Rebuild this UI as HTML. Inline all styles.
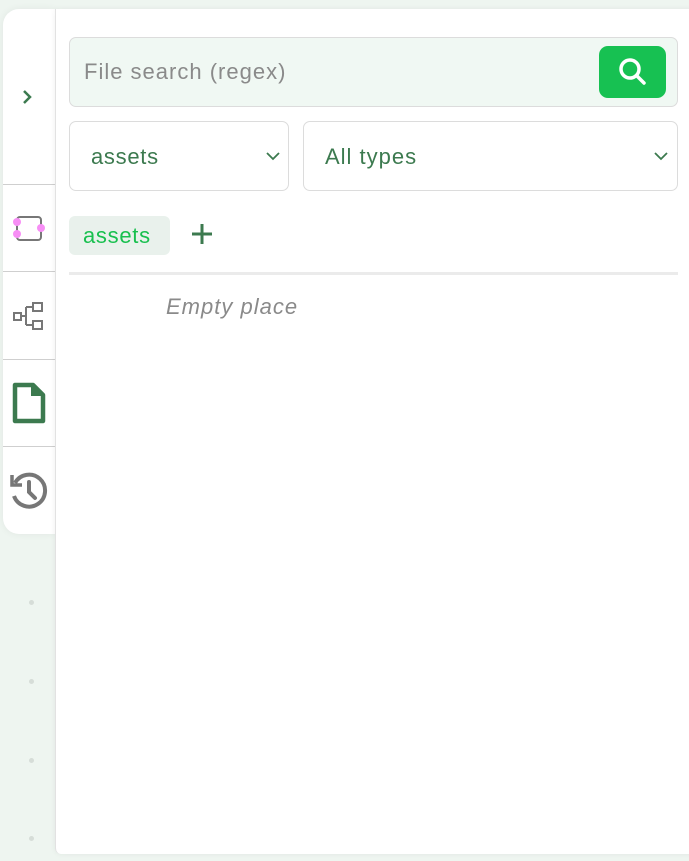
<!DOCTYPE html>
<html><head><style>
body{margin:0;width:689px;height:861px;background:#eef5f0;font-family:"Liberation Sans",sans-serif;position:relative;overflow:hidden}
.side{position:absolute;left:3px;top:9px;width:52px;height:525px;background:#fff;border-radius:16px 0 0 16px;box-shadow:0 0 8px rgba(0,0,0,.06)}
.sep{position:absolute;left:0;width:52px;height:1px;background:#cfcfcf}
.panel{position:absolute;left:55px;top:9px;width:640px;height:845px;background:#fff;border-left:1px solid #e2e2e2;border-radius:0 0 0 6px;box-shadow:0 0 6px rgba(0,0,0,.06)}
.box{position:absolute;border:1px solid #dcdcdc;border-radius:7px;box-sizing:border-box}
.t{position:absolute;font-size:22px;white-space:nowrap;letter-spacing:1px}
.dot{position:absolute;left:29px;width:5px;height:5px;border-radius:50%;background:#d6ddd8}
</style></head><body>
<div class="dot" style="top:600px"></div><div class="dot" style="top:679px"></div><div class="dot" style="top:758px"></div><div class="dot" style="top:836px"></div>
<div class="side">
<svg style="position:absolute;left:17px;top:80px" width="14" height="16"><path d="M4 2l6 6-6 6" fill="none" stroke="#3c7a4f" stroke-width="2.5"/></svg>
<div class="sep" style="top:175px"></div>
<svg style="position:absolute;left:8px;top:205px" width="36" height="30"><rect x="6" y="3" width="24" height="23" rx="3" fill="none" stroke="#777" stroke-width="2"/><circle cx="6" cy="8" r="4" fill="#f78ef5"/><circle cx="6" cy="20" r="4" fill="#f78ef5"/><circle cx="30" cy="14" r="4" fill="#f78ef5"/></svg>
<div class="sep" style="top:262px"></div>
<svg style="position:absolute;left:9px;top:292px" width="34" height="32" fill="none" stroke="#777" stroke-width="2"><rect x="2" y="12" width="7" height="7"/><rect x="21" y="2" width="9" height="8"/><rect x="21" y="20" width="9" height="8"/><path d="M9 15h5M14 6v18M14 6h7M14 24h7"/></svg>
<div class="sep" style="top:350px"></div>
<svg style="position:absolute;left:8px;top:373px" width="36" height="44"><path d="M4 3h18l10 10v26H4z" fill="none" stroke="#3c7a4f" stroke-width="4.5" stroke-linejoin="round"/><path d="M20 2v12h12z" fill="#3c7a4f"/></svg>
<div class="sep" style="top:437px"></div>
<svg style="position:absolute;left:5px;top:462px" width="40" height="40" fill="none" stroke="#777" stroke-width="4"><path d="M7 12a16 16 0 1 1-1 13"/><path d="M4 4v10h10" stroke-width="3.5"/><path d="M21 11v10l6 6" stroke-linecap="round"/></svg>
</div>
<div class="panel"></div>
<div class="box" style="left:69px;top:37px;width:609px;height:70px;background:#f0f8f3"></div>
<div class="t" style="left:84px;top:59px;color:#8a8a8a">File search (regex)</div>
<div style="position:absolute;left:599px;top:46px;width:67px;height:52px;background:#17c152;border-radius:9px"></div>
<svg style="position:absolute;left:616px;top:55px" width="34" height="34" fill="none" stroke="#fff" stroke-width="3.5"><circle cx="14" cy="14" r="9"/><path d="M21 21l7 7" stroke-linecap="round"/></svg>
<div class="box" style="left:69px;top:121px;width:220px;height:70px"></div>
<div class="t" style="left:91px;top:144px;color:#3c7a4f;letter-spacing:.7px">assets</div>
<svg style="position:absolute;left:266px;top:151px" width="14" height="10"><path d="M1 2l6 6 6-6" fill="none" stroke="#3c7a4f" stroke-width="1.8"/></svg>
<div class="box" style="left:303px;top:121px;width:375px;height:70px"></div>
<div class="t" style="left:325px;top:144px;color:#3c7a4f">All types</div>
<svg style="position:absolute;left:654px;top:151px" width="14" height="10"><path d="M1 2l6 6 6-6" fill="none" stroke="#3c7a4f" stroke-width="1.8"/></svg>
<div style="position:absolute;left:69px;top:216px;width:101px;height:39px;background:#e9f1ec;border-radius:6px"></div>
<div class="t" style="left:83px;top:223px;color:#19c04f;letter-spacing:.7px">assets</div>
<svg style="position:absolute;left:190px;top:222px" width="24" height="24"><path d="M12 2v20M2 12h20" stroke="#3c7a4f" stroke-width="3"/></svg>
<div style="position:absolute;left:69px;top:272px;width:609px;height:3px;background:#ebebeb"></div>
<div class="t" style="left:166px;top:294px;color:#8a8a8a;font-style:italic">Empty place</div>
</body></html>
